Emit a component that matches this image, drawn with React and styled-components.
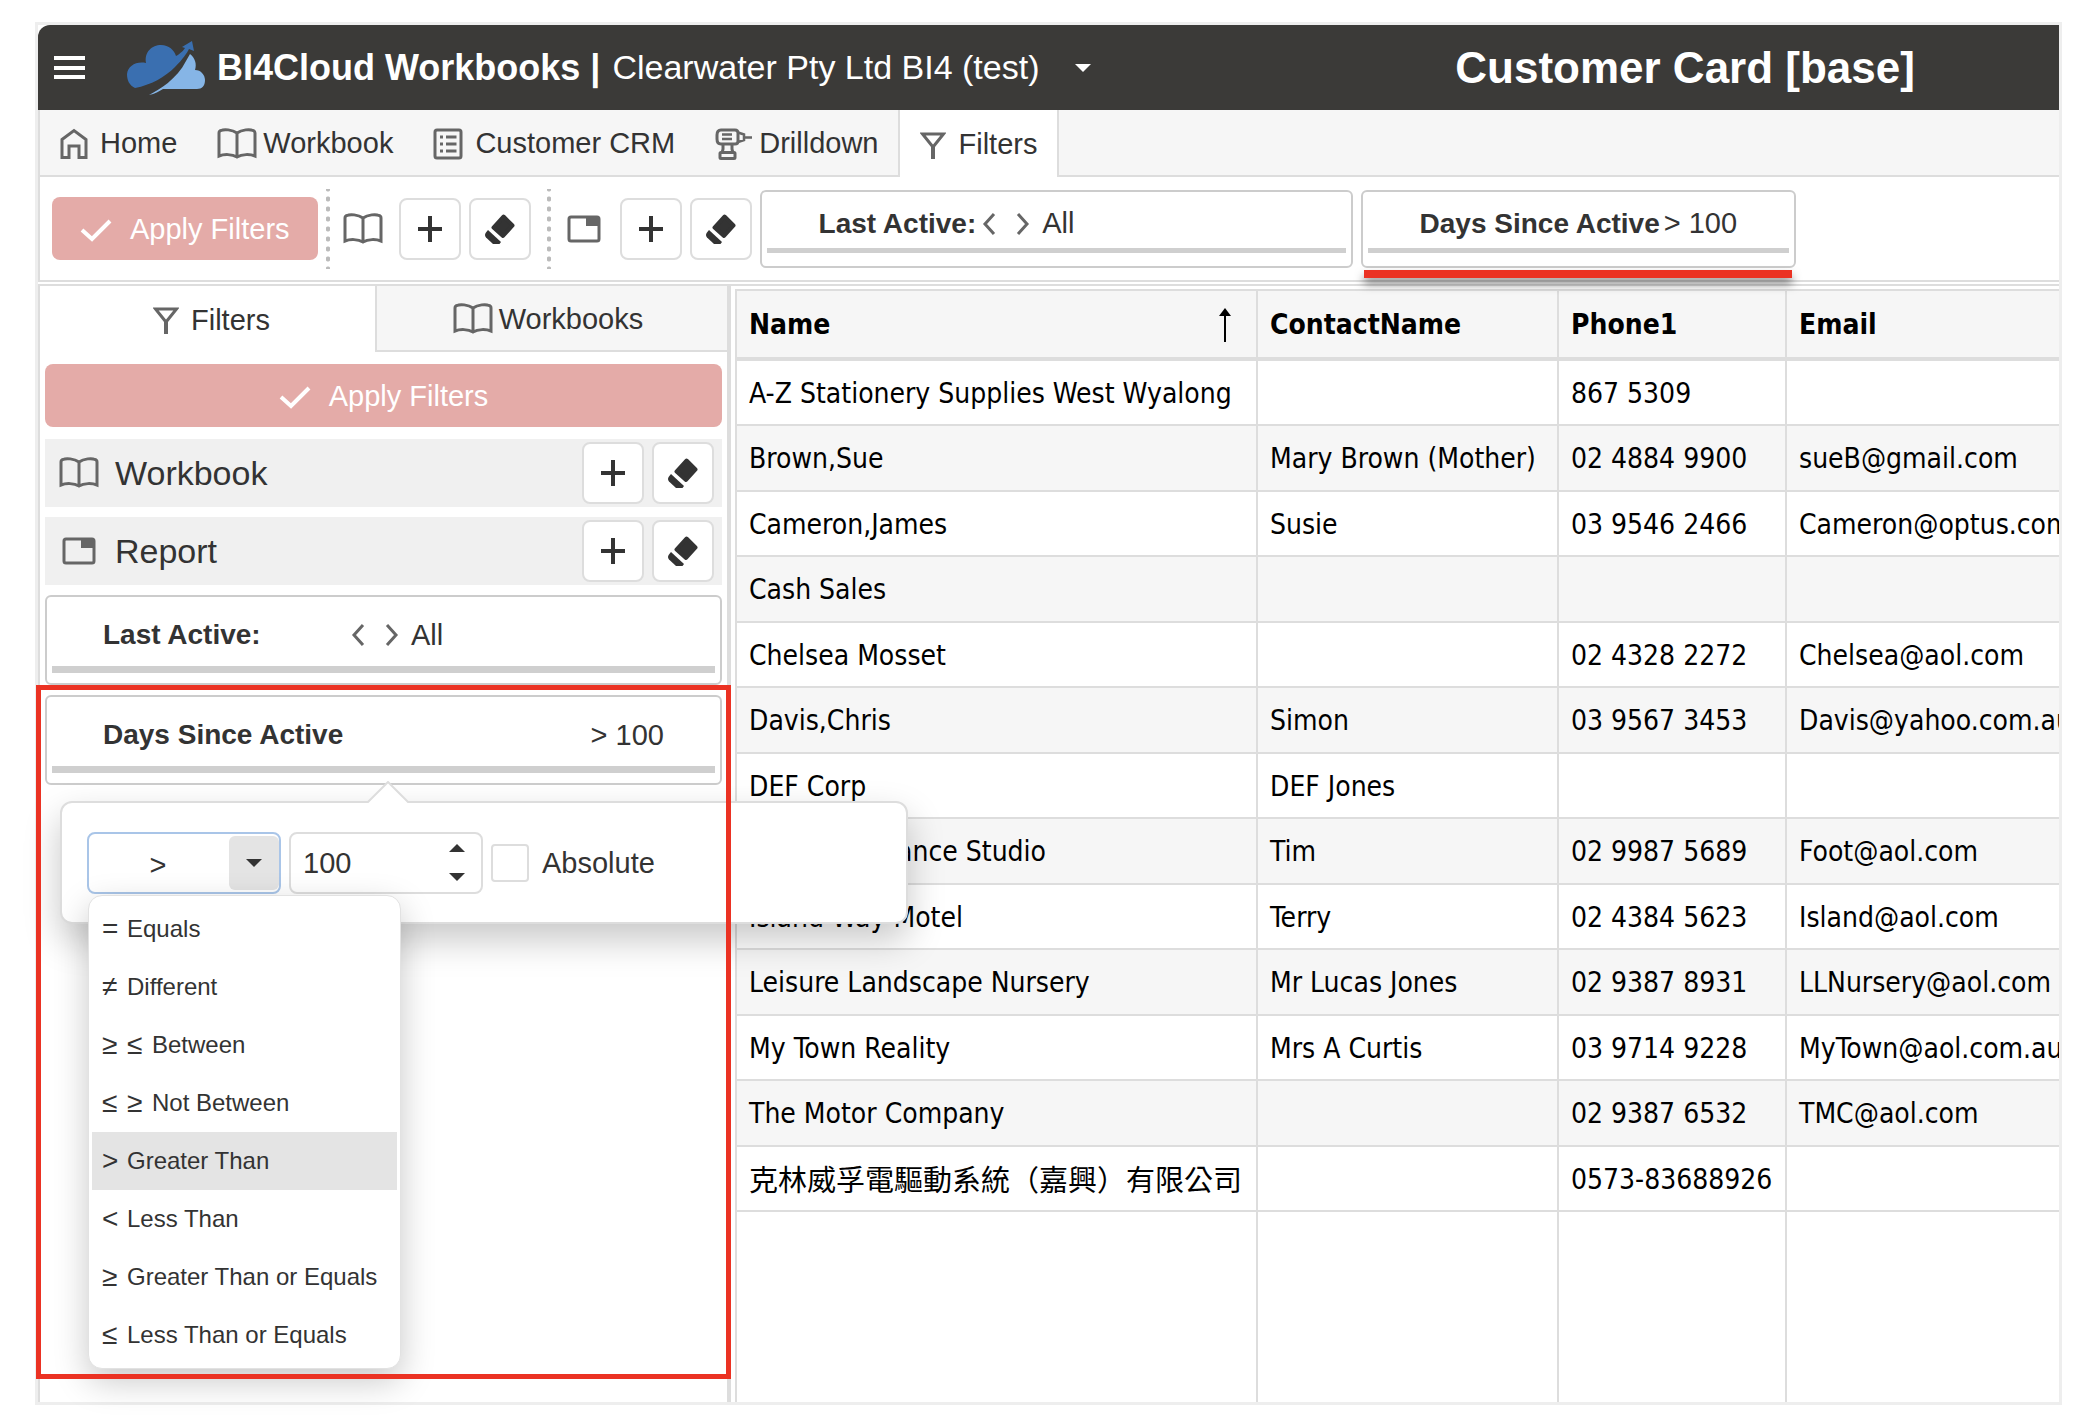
import React, { useState } from "react";
import styled, { createGlobalStyle } from "styled-components";

const GlobalStyle = createGlobalStyle`
  * {
    box-sizing: border-box;
  }
  body {
    margin: 0;
    background: #ffffff;
    color: #333333;
    font-family: "Liberation Sans", Arial, sans-serif;
    font-size: 29px;
  }
  button, input, select {
    font: inherit;
    color: inherit;
    margin: 0;
  }
`;

const Page = styled.div`
  height: 100vh;
  min-height: 1200px;
  padding: 22px 38px 17px 35px;
`;

const Frame = styled.div`
  height: 100%;
  display: flex;
  flex-direction: column;
  border: 3px solid #eeeeee;
`;

const Header = styled.header`
  flex: none;
  height: 85px;
  display: grid;
  grid-template-columns: 63fr 37fr;
  align-items: center;
  background: #3b3a38;
  color: #ffffff;
  border-top-left-radius: 12px;
`;

const Brand = styled.div`
  display: flex;
  align-items: center;
  padding-left: 16px;
  white-space: nowrap;
`;

const PlainButton = styled.button`
  display: flex;
  align-items: center;
  padding: 0;
  border: none;
  background: none;
  cursor: pointer;
`;

const Logo = styled.svg`
  width: 78px;
  height: 54px;
  margin: 0 12px 0 41px;
`;

const BrandName = styled.span`
  font-size: 36px;
  font-weight: bold;
`;

const Company = styled.span`
  font-size: 34px;
  margin: 0 36px 0 12px;
`;

const Title = styled.h1`
  margin: 0;
  font-size: 44px;
  line-height: 48px;
  text-align: center;
  white-space: nowrap;
`;

const TabBar = styled.nav`
  flex: none;
  height: 67px;
  display: flex;
  background: #f6f6f6;
  border-left: 2px solid #dddddd;
  white-space: nowrap;
`;

const Tab = styled.a`
  display: flex;
  align-items: center;
  justify-content: center;
  gap: ${(props) => props.$gap || 12}px;
  padding: 2px 20px 0;
  color: #333333;
  text-decoration: none;
  background: ${(props) => (props.$active ? "#ffffff" : "#f6f6f6")};
  border: 0 solid #dddddd;
  border-bottom-width: ${(props) => (props.$active ? 0 : 2)}px;
  border-left-width: ${(props) => (props.$active ? 2 : 0)}px;
  border-right-width: ${(props) => (props.$active ? 2 : 0)}px;
`;

const TabRest = styled.div`
  flex: 1;
  border-bottom: 2px solid #dddddd;
`;

const Toolbar = styled.div`
  flex: none;
  height: 105px;
  display: flex;
  align-items: center;
  gap: 8px;
  padding-left: 12px;
  border-left: 2px solid #dddddd;
  border-bottom: 2px solid #dddddd;
  white-space: nowrap;
`;

const ApplyButton = styled.button`
  height: 63px;
  display: flex;
  align-items: center;
  justify-content: center;
  gap: 18px;
  padding: 2px 28px 0;
  border: none;
  border-radius: 8px;
  background: #e4aba8;
  color: #ffffff;
`;

const SideApply = styled(ApplyButton)`
  margin-bottom: 2px;
`;

const ToolGroup = styled.div`
  display: flex;
  align-items: center;
  gap: 8px;
`;

const Dots = styled.div`
  width: 4px;
  height: 80px;
  background: radial-gradient(circle, #bbbbbb 2px, transparent 3px) center / 4px 10px repeat-y;
  ${ToolGroup} + & {
    margin-left: 8px;
  }
`;

const ToolIcon = styled.span`
  display: flex;
  justify-content: center;
  width: 40px;
  margin: 0 8px 0 5px;
`;

const SquareButton = styled.button`
  width: 62px;
  height: 62px;
  display: flex;
  align-items: center;
  justify-content: center;
  padding: 0;
  border: 2px solid #dddddd;
  border-radius: 8px;
  background: #ffffff;
`;

const ToolFilter = styled.div`
  position: relative;
  width: ${(props) => props.$width}px;
  height: 78px;
  display: flex;
  flex-direction: column;
  justify-content: space-between;
  padding: 11px 5px 13px;
  border: 2px solid #cccccc;
  border-radius: 6px;
`;

const ToolFilterText = styled.div`
  display: flex;
  align-items: center;
  gap: 4px;
  height: 42px;
  padding-left: 52px;
`;

const FilterLabel = styled.span`
  font-size: 28px;
  font-weight: bold;
`;

const Chevrons = styled.span`
  display: flex;
  gap: 20px;
  margin: 0 ${(props) => props.$space}px 0 2px;
`;

const Track = styled.div`
  height: ${(props) => props.$height}px;
  background: #cfcfcf;
`;

// red marker that lies under the highlighted filter
const Underline = styled.div`
  position: absolute;
  left: 1px;
  right: 2px;
  top: 78px;
  height: 8px;
  background: #eb3223;
  box-shadow: 0 6px 10px rgba(0, 0, 0, 0.5);
`;

const Workspace = styled.main`
  flex: 1;
  min-height: 0;
  display: flex;
  margin-top: 2px;
  border-top: 2px solid #dddddd;
`;

const Side = styled.aside`
  position: relative;
  flex: none;
  width: 693px;
  border-left: 2px solid #dddddd;
  border-right: 4px solid #dddddd;
`;

const SideTabs = styled.div`
  display: grid;
  grid-template-columns: 335px 1fr;
  height: 66px;
`;

const SideTab = styled(Tab)`
  padding-left: ${(props) => (props.$active ? 28 : 12)}px;
  border-left-width: ${(props) => (props.$active ? 0 : 2)}px;
  border-right-width: 0;
`;

const SideBody = styled.div`
  display: flex;
  flex-direction: column;
  gap: 10px;
  padding: 12px 5px;
`;

const Section = styled.div`
  height: 68px;
  display: flex;
  align-items: center;
  gap: 8px;
  padding: 0 8px 0 14px;
  background: #f0f0f0;
`;

const SectionIcon = styled.span`
  display: flex;
  justify-content: center;
  width: 40px;
`;

const SectionName = styled.h2`
  flex: 1;
  margin: 0 0 0 8px;
  font-size: 34px;
  font-weight: normal;
`;

const SideFilter = styled.div`
  height: 90px;
  display: flex;
  flex-direction: column;
  justify-content: space-between;
  padding: 17px 5px 10px;
  border: 2px solid #cccccc;
  border-radius: 6px;
`;

const SideFilterText = styled.div`
  display: grid;
  grid-template-columns: ${(props) => props.$columns};
  align-items: center;
  height: 42px;
  padding: 0 51px;
`;

const Value = styled.span`
  display: flex;
  align-items: center;
`;

// red frame round the days filter and its popover
const Highlight = styled.div`
  position: absolute;
  z-index: 5;
  left: -4px;
  right: -4px;
  top: 399px;
  bottom: 23px;
  border: 5px solid #eb3223;
  pointer-events: none;
`;

const Popover = styled.div`
  position: absolute;
  z-index: 3;
  left: 20px;
  top: 515px;
  width: 848px;
  height: 123px;
  display: flex;
  align-items: center;
  gap: 8px;
  padding: 0 25px;
  background: #ffffff;
  border: 2px solid #dddddd;
  border-radius: 12px;
  box-shadow: 0 16px 36px rgba(0, 0, 0, 0.22);
`;

const Arrow = styled.svg`
  position: absolute;
  left: 305px;
  top: -22px;
  width: 42px;
  height: 22px;
`;

const Combo = styled.div`
  position: relative;
  width: 194px;
  height: 62px;
  display: flex;
  padding: 2px 0;
  border: 2px solid #a9c5e8;
  border-radius: 8px;
`;

const ComboValue = styled.input`
  flex: 1;
  min-width: 0;
  padding: 6px 2px 0 0;
  text-align: center;
  border: none;
  outline: none;
  background: none;
`;

const ComboToggle = styled.button`
  width: 50px;
  display: flex;
  align-items: center;
  justify-content: center;
  padding: 0;
  border: none;
  border-radius: 6px;
  background: #e4e4e4;
`;

const NumberBox = styled.div`
  width: 194px;
  height: 62px;
  display: flex;
  align-items: center;
  padding: 0 16px 0 12px;
  border: 2px solid #dddddd;
  border-radius: 8px;
`;

const NumberInput = styled.input`
  flex: 1;
  min-width: 0;
  padding: 2px 0 0;
  border: none;
  outline: none;
  background: none;
`;

const Spinner = styled.div`
  display: flex;
  flex-direction: column;
  gap: 21px;
`;

const CheckLabel = styled.label`
  display: flex;
  align-items: center;
  gap: 13px;
  line-height: 38px;
`;

const Checkbox = styled.input`
  appearance: none;
  width: 38px;
  height: 38px;
  border: 2px solid #dddddd;
  border-radius: 4px;
  background: #ffffff;
`;

const Menu = styled.ul`
  position: absolute;
  z-index: 4;
  left: -1px;
  top: 61px;
  width: 313px;
  margin: 0;
  padding: 4px 3px;
  list-style: none;
  background: #ffffff;
  border: 1px solid #e2e2e2;
  border-radius: 14px;
  box-shadow: 0 12px 34px rgba(0, 0, 0, 0.22);
`;

const MenuItem = styled.li`
  height: 58px;
  display: flex;
  align-items: center;
  gap: 10px;
  padding-left: 10px;
  font-size: 24px;
  background: ${(props) => (props.$selected ? "#e4e4e4" : "transparent")};
  white-space: nowrap;
`;

const Sign = styled.span`
  width: 15px;
  font-size: 28px;
`;

const GridPane = styled.div`
  flex: 1;
  min-width: 0;
  margin: 3px 0 0 4px;
  border: 0 solid #dddddd;
  border-width: 2px 0 0 2px;
  overflow: hidden;
`;

const Table = styled.table`
  width: 100%;
  height: 100%;
  table-layout: fixed;
  border-collapse: separate;
  border-spacing: 0;
  color: #000000;
  font-family: "DejaVu Sans Condensed", "Noto Sans", "Noto Sans CJK TC", sans-serif;
  font-size: 28px;
  line-height: 36px;
`;

const Col = styled.col`
  width: ${(props) => (props.$width ? props.$width + "px" : "auto")};
`;

const Th = styled.th`
  height: 70px;
  padding: 2px 24px 0 12px;
  text-align: left;
  background: #f6f6f6;
  border-right: ${(props) => (props.$last ? 0 : 2)}px solid #dddddd;
  border-bottom: 4px solid #dddddd;
`;

const ThInner = styled.div`
  display: flex;
  align-items: center;
  justify-content: space-between;
`;

const Row = styled.tr`
  height: 65px;
  background: #ffffff;
  &:nth-child(even) {
    height: 66px;
    background: #f6f6f6;
  }
`;

const Td = styled.td`
  padding: 2px 0 0 12px;
  overflow: hidden;
  white-space: nowrap;
  border-right: ${(props) => (props.$last ? 0 : 2)}px solid #dddddd;
  border-bottom: 2px solid #dddddd;
`;

const FillTd = styled(Td)`
  border-bottom: none;
`;

const FillRow = styled.tr`
  background: #ffffff;
`;

const Cjk = styled.span`
  font-family: "Noto Sans CJK TC", sans-serif;
  font-size: 29px;
`;

const Icon = ({ w, h, children, color = "#666666", stroke = 3 }) => (
  <svg
    width={w}
    height={h}
    viewBox={`0 0 ${w} ${h}`}
    fill="none"
    stroke={color}
    strokeWidth={stroke}
    aria-hidden="true"
  >
    {children}
  </svg>
);

const HomeIcon = () => (
  <Icon w={28} h={32}>
    <path d="M2 11.500 L14 2.500 L26 11.500 V29.500 H19 V18 H9 V29.500 H2 Z" />
  </Icon>
);

const BookIcon = () => (
  <Icon w={40} h={32}>
    <path d="M20 5 C15 1.500 7 1 4 2.500 Q2 3 2 5 V28 C7 26 15 26 20 29 C25 26 33 26 38 28 V5 Q38 3 36 2.500 C33 1 25 1.500 20 5 Z M20 4 V29" />
  </Icon>
);

const ListIcon = () => (
  <Icon w={30} h={32}>
    <rect x="2" y="2" width="26" height="28" rx="2" />
    <path d="M7 9 H10 M13 9 H23.500 M7 16 H10 M13 16 H23.500 M7 23 H10 M13 23 H23.500" />
  </Icon>
);

const DrillIcon = () => (
  <Icon w={38} h={32}>
    <path d="M6 2 H20 Q23 2 23 5 V13 Q23 16 20 16 H6 Q2 16 2 11 V7 Q2 2 6 2 Z" />
    <path d="M23 4.500 L29 6.500 V12 L23 14 M29 9.500 H37 M7 6.500 H17 M7 11 H17" strokeWidth="2.500" />
    <path d="M8 16 V21 L7 25 M17 16 V21 L18 25" />
    <rect x="5" y="24.500" width="15" height="6" rx="1" />
  </Icon>
);

const FunnelIcon = () => (
  <Icon w={26} h={28}>
    <path d="M2.500 3 H23.500 L13 16 Z" />
    <path d="M13 14 V28" strokeWidth="4" />
  </Icon>
);

const WindowIcon = () => (
  <Icon w={34} h={28}>
    <rect x="2" y="2" width="30" height="24" rx="2" />
    <path d="M19 2 H32 V11 H19 Z" fill="#666666" stroke="none" />
  </Icon>
);

const CheckIcon = () => (
  <Icon w={32} h={24} color="#ffffff" stroke={4}>
    <path d="M2 12 L12 21 L30 3" />
  </Icon>
);

const PlusIcon = () => (
  <Icon w={28} h={28} color="#333333" stroke={4}>
    <path d="M14 1 V27 M2 14 H26" />
  </Icon>
);

const EraserIcon = () => (
  <Icon w={32} h={30} color="#333333" stroke={4}>
    <path d="M19.500 2.500 L28.500 11.500 L19 22 L9.500 13.500 Z" fill="#333333" strokeLinejoin="round" />
    <path d="M4 16 L17 28 L15.500 30 H9 L2 23.500 Q0 21 2 18.500 Z" fill="#333333" stroke="none" />
  </Icon>
);

const LeftIcon = () => (
  <Icon w={14} h={22}>
    <path d="M12 1 L3 11 L12 21" />
  </Icon>
);

const RightIcon = () => (
  <Icon w={14} h={22}>
    <path d="M2 1 L11 11 L2 21" />
  </Icon>
);

const Caret = ({ up, color = "#333333" }) => (
  <svg width="16" height="8" viewBox="0 0 16 8" fill={color} aria-hidden="true">
    <path d={up ? "M0 8 L8 0 L16 8 Z" : "M0 0 L16 0 L8 8 Z"} />
  </svg>
);

const SortIcon = () => (
  <Icon w={14} h={34} color="#000000">
    <path d="M7 6 V34" strokeWidth="2" />
    <path d="M7 0 L13 8 H1 Z" fill="#000000" stroke="none" />
  </Icon>
);

const rows = [
  ["A-Z Stationery Supplies West Wyalong", "", "867 5309", ""],
  ["Brown,Sue", "Mary Brown (Mother)", "02 4884 9900", "sueB@gmail.com"],
  ["Cameron,James", "Susie", "03 9546 2466", "Cameron@optus.com.au"],
  ["Cash Sales", "", "", ""],
  ["Chelsea Mosset", "", "02 4328 2272", "Chelsea@aol.com"],
  ["Davis,Chris", "Simon", "03 9567 3453", "Davis@yahoo.com.au"],
  ["DEF Corp", "DEF Jones", "", ""],
  ["Footloose Dance Studio", "Tim", "02 9987 5689", "Foot@aol.com"],
  ["Island Way Motel", "Terry", "02 4384 5623", "Island@aol.com"],
  ["Leisure Landscape Nursery", "Mr Lucas Jones", "02 9387 8931", "LLNursery@aol.com"],
  ["My Town Reality", "Mrs A Curtis", "03 9714 9228", "MyTown@aol.com.au"],
  ["The Motor Company", "", "02 9387 6532", "TMC@aol.com"],
  [<Cjk>克林威孚電驅動系統（嘉興）有限公司</Cjk>, "", "0573-83688926", ""],
];

const operators = [
  { signs: ["="], name: "Equals" },
  { signs: ["≠"], name: "Different" },
  { signs: ["≥", "≤"], name: "Between" },
  { signs: ["≤", "≥"], name: "Not Between" },
  { signs: [">"], name: "Greater Than" },
  { signs: ["<"], name: "Less Than" },
  { signs: ["≥"], name: "Greater Than or Equals" },
  { signs: ["≤"], name: "Less Than or Equals" },
];

const SectionButtons = () => (
  <>
    <SquareButton aria-label="Add">
      <PlusIcon />
    </SquareButton>
    <SquareButton aria-label="Clear">
      <EraserIcon />
    </SquareButton>
  </>
);

const ChevronPair = ({ space = 12 }) => (
  <Chevrons $space={space}>
    <PlainButton aria-label="Previous">
      <LeftIcon />
    </PlainButton>
    <PlainButton aria-label="Next">
      <RightIcon />
    </PlainButton>
  </Chevrons>
);

function FilterPopover() {
  const [operator, setOperator] = useState(operators[4]);
  const [days, setDays] = useState(100);
  const [absolute, setAbsolute] = useState(false);

  return (
    <Popover>
      <Arrow viewBox="0 0 42 22">
        <path d="M0 22 L21 1 L42 22" fill="#ffffff" stroke="#dddddd" strokeWidth="2" />
      </Arrow>
      <Combo>
        <ComboValue aria-label="Operator" readOnly value={operator.signs.join(" ")} />
        <ComboToggle aria-label="Show operators">
          <Caret />
        </ComboToggle>
        <Menu role="listbox">
          {operators.map((o) => (
            <MenuItem
              key={o.name}
              role="option"
              aria-selected={o === operator}
              $selected={o === operator}
              onClick={() => setOperator(o)}
            >
              {o.signs.map((s) => (
                <Sign key={s}>{s}</Sign>
              ))}
              {o.name}
            </MenuItem>
          ))}
        </Menu>
      </Combo>
      <NumberBox>
        <NumberInput
          aria-label="Days"
          value={days}
          onChange={(e) => setDays(Number(e.target.value) || 0)}
        />
        <Spinner>
          <PlainButton aria-label="More" onClick={() => setDays(days + 1)}>
            <Caret up />
          </PlainButton>
          <PlainButton aria-label="Fewer" onClick={() => setDays(days - 1)}>
            <Caret />
          </PlainButton>
        </Spinner>
      </NumberBox>
      <CheckLabel>
        <Checkbox
          type="checkbox"
          checked={absolute}
          onChange={(e) => setAbsolute(e.target.checked)}
        />
        Absolute
      </CheckLabel>
    </Popover>
  );
}

export default function App() {
  return (
    <Page>
      <GlobalStyle />
      <Frame>
        <Header>
          <Brand>
            <PlainButton aria-label="Menu">
              <Icon w={32} h={24} color="#ffffff" stroke={4}>
                <path d="M0 2 H31 M0 12 H31 M0 21 H31" />
              </Icon>
            </PlainButton>
            <Logo viewBox="0 0 78 54">
              <path
                d="M8 47 C2 44 0 39 0 33 C1 25 9 20 19 22 C17 11 25 4 34 4 C42 4 47 9 49 15 C53 13 57 9 58 7 L55 6 L65 0 L67 10 L62 8 C60 12 56 18 48 26 C38 36 24 44 8 47 Z"
                fill="#3a6fb0"
              />
              <path
                d="M22 54 C32 49 50 38 59 20 L63 13 C68 17 70 23 68 29 C74 29 78 34 78 39 C78 45 75 48 70 48 H36 C32 50 28 53 22 54 Z"
                fill="#86b5e6"
              />
            </Logo>
            <BrandName>BI4Cloud Workbooks |</BrandName>
            <Company>Clearwater Pty Ltd BI4 (test)</Company>
            <PlainButton aria-label="Switch company">
              <Caret color="#ffffff" />
            </PlainButton>
          </Brand>
          <Title>Customer Card [base]</Title>
        </Header>

        <TabBar>
          <Tab href="#home">
            <HomeIcon />
            Home
          </Tab>
          <Tab href="#workbook" $gap={6}>
            <BookIcon />
            Workbook
          </Tab>
          <Tab href="#crm">
            <ListIcon />
            Customer CRM
          </Tab>
          <Tab href="#drilldown" $gap={6}>
            <DrillIcon />
            Drilldown
          </Tab>
          <Tab href="#filters" $active>
            <FunnelIcon />
            Filters
          </Tab>
          <TabRest />
        </TabBar>

        <Toolbar>
          <ApplyButton>
            <CheckIcon />
            Apply Filters
          </ApplyButton>
          <Dots />
          <ToolGroup>
            <ToolIcon>
              <BookIcon />
            </ToolIcon>
            <SectionButtons />
          </ToolGroup>
          <Dots />
          <ToolGroup>
            <ToolIcon>
              <WindowIcon />
            </ToolIcon>
            <SectionButtons />
          </ToolGroup>
          <ToolFilter $width={593}>
            <ToolFilterText>
              <FilterLabel>Last Active:</FilterLabel>
              <ChevronPair space={8} />
              All
            </ToolFilterText>
            <Track $height={5} />
          </ToolFilter>
          <ToolFilter $width={435}>
            <ToolFilterText>
              <FilterLabel>Days Since Active</FilterLabel>
              &gt; 100
            </ToolFilterText>
            <Track $height={5} />
            <Underline />
          </ToolFilter>
        </Toolbar>

        <Workspace>
          <Side>
            <SideTabs>
              <SideTab href="#side-filters" $active>
                <FunnelIcon />
                Filters
              </SideTab>
              <SideTab href="#side-workbooks" $gap={6}>
                <BookIcon />
                Workbooks
              </SideTab>
            </SideTabs>
            <SideBody>
              <SideApply>
                <CheckIcon />
                Apply Filters
              </SideApply>
              <Section>
                <SectionIcon>
                  <BookIcon />
                </SectionIcon>
                <SectionName>Workbook</SectionName>
                <SectionButtons />
              </Section>
              <Section>
                <SectionIcon>
                  <WindowIcon />
                </SectionIcon>
                <SectionName>Report</SectionName>
                <SectionButtons />
              </Section>
              <SideFilter>
                <SideFilterText $columns="246px 1fr">
                  <FilterLabel>Last Active:</FilterLabel>
                  <Value>
                    <ChevronPair />
                    All
                  </Value>
                </SideFilterText>
                <Track $height={7} />
              </SideFilter>
              <SideFilter>
                <SideFilterText $columns="1fr auto">
                  <FilterLabel>Days Since Active</FilterLabel>
                  <Value>&gt; 100</Value>
                </SideFilterText>
                <Track $height={7} />
              </SideFilter>
            </SideBody>
            <FilterPopover />
            <Highlight />
          </Side>

          <GridPane>
            <Table>
              <colgroup>
                <Col $width={521} />
                <Col $width={301} />
                <Col $width={228} />
                <Col />
              </colgroup>
              <thead>
                <tr>
                  <Th>
                    <ThInner>
                      Name
                      <SortIcon />
                    </ThInner>
                  </Th>
                  <Th>ContactName</Th>
                  <Th>Phone1</Th>
                  <Th $last>Email</Th>
                </tr>
              </thead>
              <tbody>
                {rows.map((row, i) => (
                  <Row key={i}>
                    {row.map((cell, j) => (
                      <Td key={j} $last={j === 3}>
                        {cell}
                      </Td>
                    ))}
                  </Row>
                ))}
                <FillRow>
                  <FillTd />
                  <FillTd />
                  <FillTd />
                  <FillTd $last />
                </FillRow>
              </tbody>
            </Table>
          </GridPane>
        </Workspace>
      </Frame>
    </Page>
  );
}
